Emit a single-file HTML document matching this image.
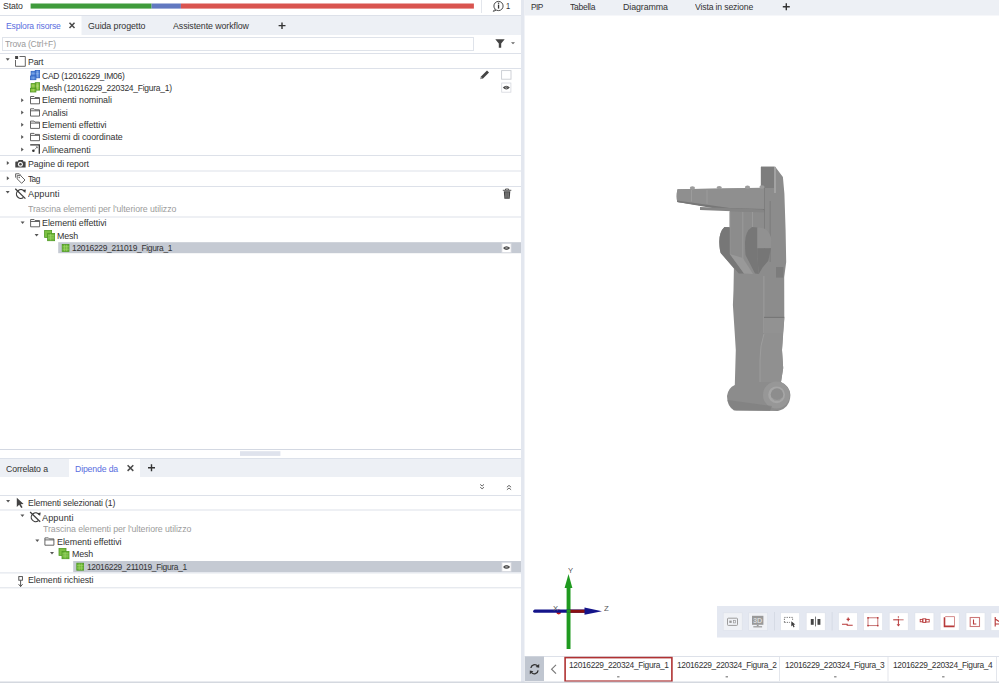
<!DOCTYPE html><html><head><meta charset="utf-8"><style>
html,body{margin:0;padding:0;width:999px;height:683px;overflow:hidden;background:#fff;}
.t{position:absolute;white-space:pre;font-family:"Liberation Sans", sans-serif;line-height:1;transform-origin:0 0;}
svg{position:absolute;left:0;top:0;}
</style></head><body>
<svg width="999" height="683" viewBox="0 0 999 683">
<rect x="30.6" y="3.5" width="121" height="5.1" fill="#3f9b3c" />
<rect x="151.6" y="3.5" width="29.3" height="5.1" fill="#6178c0" />
<rect x="180.9" y="3.5" width="293" height="5.1" fill="#d9544f" />
<rect x="481" y="0" width="1" height="13" fill="#e3e6ec" />
<g fill="none" stroke="#333" stroke-width="0.9"><circle cx="498.5" cy="6" r="4.6"/></g>
<path d="M494.5 9.5 L493.3 11.4 L496 10.3" fill="#fff" stroke="#333" stroke-width="0.8"/>
<rect x="497.9" y="4.6" width="1.3" height="4" fill="#333"/><rect x="497.9" y="2.6" width="1.3" height="1.2" fill="#333"/>
<rect x="0" y="15" width="521" height="1" fill="#dde1e9" />
<rect x="0" y="16" width="521" height="19" fill="#edf0f5" />
<rect x="0" y="16" width="81.5" height="19" fill="#ffffff" />
<path d="M69.5 22.7 L74.5 27.9 M74.5 22.7 L69.5 27.9" stroke="#4a4a4a" stroke-width="1.5"/>
<path d="M282 22.4 V28.9 M278.6 25.65 H285.5" stroke="#333" stroke-width="1.4"/>
<rect x="2.5" y="37.5" width="471" height="13" fill="#fff" stroke="#dfe3ea" stroke-width="1"/>
<path d="M495.3 39.3 H504.7 L501.2 43.6 V47.8 L498.8 47.8 V43.6 Z" fill="#444"/>
<path d="M511 42.3 H515 L513 44.3 Z" fill="#666"/>
<rect x="0" y="53" width="521" height="1" fill="#dde1e9" />
<path d="M5.7 58.3 H9.7 L7.7 60.8 Z" fill="#555"/>
<g fill="none" stroke="#555" stroke-width="0.9"><path d="M19.5 56.5 H25.3 V66.3 H15.5 V60"/></g><rect x="15.1" y="56" width="3" height="3" fill="#444"/>
<rect x="0" y="68" width="521" height="1" fill="#dde1e9" />
<path d="M480.5 79 L481 76.6 L487 70.6 L489 72.6 L483 78.6 Z" fill="#444"/><path d="M480.3 79.3 L481 76.8 L482.8 78.6 Z" fill="#999"/>
<rect x="501.6" y="70.6" width="9.4" height="8.6" fill="#fff" stroke="#c9ccd2" stroke-width="0.9"/>
<rect x="501.7" y="83.0" width="9.2" height="9.2" fill="#fff" stroke="#d5d8de" stroke-width="0.8"/>
<path d="M502.8 87.6 Q506.3 83.8 509.8 87.6 Q506.3 91.4 502.8 87.6 Z" fill="#4a4a4a"/><circle cx="506.3" cy="87.6" r="1.1" fill="#bdbdbd"/><circle cx="506.3" cy="87.6" r="0.5" fill="#4a4a4a"/>
<g fill="#5b8ede" stroke="#2f62c0" stroke-width="0.8"><rect x="35.2" y="70.4" width="4.4" height="7.4"/><rect x="31.1" y="71.3" width="4.1" height="4.7"/><rect x="30.4" y="76" width="5.5" height="3.7"/></g>
<path d="M35.6 73.7 H39.2 M37.4 70.8 V77.4 M31.5 73.6 H34.8 M33.2 76.4 V79.3" stroke="#fff" stroke-opacity="0.35" stroke-width="0.6"/>
<g fill="#8cc541" stroke="#4b951f" stroke-width="0.8"><rect x="35.2" y="82.7" width="4.4" height="7.4"/><rect x="31.1" y="83.6" width="4.1" height="4.7"/><rect x="30.4" y="88.3" width="5.5" height="3.7"/></g>
<path d="M35.6 86.0 H39.2 M37.4 83.1 V89.7 M31.5 85.89999999999999 H34.8 M33.2 88.7 V91.6" stroke="#fff" stroke-opacity="0.35" stroke-width="0.6"/>
<path d="M21.2 98.2 V102.2 L23.7 100.2 Z" fill="#555"/>
<g fill="none" stroke="#555" stroke-width="0.9"><path d="M30.5 96.5 H34 L35 97.5 H39.5 V103.8 H30.5 Z"/><path d="M30.5 98.5 H39.5"/></g>
<path d="M21.2 110.5 V114.5 L23.7 112.5 Z" fill="#555"/>
<g fill="none" stroke="#555" stroke-width="0.9"><path d="M30.5 108.8 H34 L35 109.8 H39.5 V116.1 H30.5 Z"/><path d="M30.5 110.8 H39.5"/></g>
<path d="M21.2 122.8 V126.8 L23.7 124.8 Z" fill="#555"/>
<g fill="none" stroke="#555" stroke-width="0.9"><path d="M30.5 121.1 H34 L35 122.1 H39.5 V128.39999999999998 H30.5 Z"/><path d="M30.5 123.1 H39.5"/></g>
<path d="M21.2 135.1 V139.1 L23.7 137.1 Z" fill="#555"/>
<g fill="none" stroke="#555" stroke-width="0.9"><path d="M30.5 133.4 H34 L35 134.4 H39.5 V140.70000000000002 H30.5 Z"/><path d="M30.5 135.4 H39.5"/></g>
<path d="M21.2 147.6 V151.6 L23.7 149.6 Z" fill="#555"/>
<path d="M30.2 144.8 H39.3 V153.7" fill="none" stroke="#333" stroke-width="1.3"/><circle cx="33.4" cy="150.8" r="1.3" fill="#333"/><path d="M34.6 149.6 L37.2 147" fill="none" stroke="#555" stroke-width="0.7"/><path d="M35.6 146.6 H37.6 V148.6 Z" fill="#555"/>
<rect x="0" y="155" width="521" height="1" fill="#dde1e9" />
<path d="M6.8 160.9 V164.9 L9.3 162.9 Z" fill="#555"/>
<path d="M15.3 162.2 Q15.3 161.6 16 161.6 H17.8 L18.6 159.9 H22.8 L23.6 161.6 H25 Q25.6 161.6 25.6 162.2 V167.4 H15.3 Z" fill="#444"/><circle cx="20.4" cy="164.3" r="2.5" fill="#f4f4f4"/><circle cx="20.4" cy="164.3" r="1.3" fill="#444"/>
<rect x="0" y="170.5" width="521" height="1" fill="#dde1e9" />
<path d="M6.8 176.3 V180.3 L9.3 178.3 Z" fill="#555"/>
<g fill="none" stroke="#555" stroke-width="0.9" stroke-linejoin="round"><path d="M15.6 177.6 V173.8 H19.3 L20.8 175.3"/><path d="M17.2 175.6 H20.6 L25 180 L21.6 183.3 L17.2 178.9 Z"/></g><circle cx="19.2" cy="177.5" r="0.7" fill="#555"/>
<rect x="0" y="186" width="521" height="1" fill="#dde1e9" />
<path d="M5.7 191 H9.7 L7.7 193.5 Z" fill="#555"/>
<g transform="translate(0 0)"><g fill="none" stroke="#3c3c3c" stroke-width="1.2"><path d="M24.4 191.4 A4.4 4.4 0 1 0 23.4 197.6"/><path d="M15.3 188.8 L25.4 198.6"/></g><path d="M22.6 190 L25.9 189.4 L25.3 192.9 Z" fill="#3c3c3c"/></g>
<path d="M502.8 190.3 H511.3 M505.5 190 V189 H508.6 V190" stroke="#444" stroke-width="0.9" fill="none"/><path d="M503.8 191.2 H510.3 L509.7 198.8 H504.4 Z" fill="#444"/><path d="M505.8 192.3 V197.8 M507 192.3 V197.8 M508.3 192.3 V197.8" stroke="#bbb" stroke-width="0.5"/>
<rect x="0" y="216.5" width="521" height="1" fill="#dde1e9" />
<path d="M20.6 221.6 H24.6 L22.6 224.1 Z" fill="#555"/>
<g fill="none" stroke="#555" stroke-width="0.9"><path d="M30.6 219.5 H34.1 L35.1 220.5 H39.6 V226.8 H30.6 Z"/><path d="M30.6 221.5 H39.6"/></g>
<path d="M34.6 234 H38.6 L36.6 236.5 Z" fill="#555"/>
<g stroke="#4f9a24" stroke-width="0.8"><rect x="44.6" y="230.4" width="7" height="7" fill="#7cc043"/><rect x="47.6" y="233.4" width="7" height="7.3" fill="#6fb83a"/></g>
<path d="M48.0 235.8 H54.2 M48.0 238 H54.2 M50.7 233.8 V240.4" stroke="#a6d877" stroke-width="0.6"/>
<rect x="58.2" y="242.2" width="462.8" height="11" fill="#c5cad3" />
<rect x="62.199999999999996" y="244.4" width="6.8" height="7" fill="#6ab534" stroke="#4f9a24" stroke-width="0.8"/>
<path d="M62.599999999999994 246.8 H68.8 M62.599999999999994 249.2 H68.8 M64.6 244.8 V251.2 M66.7 244.8 V251.2" stroke="#a8da72" stroke-width="0.6"/>
<rect x="501.9" y="243.5" width="9.2" height="9.2" fill="#fff" stroke="#d5d8de" stroke-width="0.8"/>
<path d="M503.0 248.1 Q506.5 244.3 510.0 248.1 Q506.5 251.9 503.0 248.1 Z" fill="#4a4a4a"/><circle cx="506.5" cy="248.1" r="1.1" fill="#bdbdbd"/><circle cx="506.5" cy="248.1" r="0.5" fill="#4a4a4a"/>
<rect x="0" y="449" width="521" height="1" fill="#d3d8e2" />
<rect x="240" y="451.2" width="40.4" height="4.7" fill="#dfe3ed" />
<rect x="0" y="458" width="521" height="1" fill="#dce1ea" />
<rect x="0" y="459" width="521" height="18" fill="#edf0f5" />
<rect x="69" y="459" width="71" height="18" fill="#ffffff" />
<path d="M127.6 465.2 L133.3 470.9 M133.3 465.2 L127.6 470.9" stroke="#4a4a4a" stroke-width="1.5"/>
<path d="M151.5 464.2 V471.2 M148 467.7 H155" stroke="#333" stroke-width="1.4"/>
<path d="M480.2 484.4 L482.1 486 L484 484.4 M480.2 487.2 L482.1 488.8 L484 487.2" fill="none" stroke="#555" stroke-width="0.9"/>
<path d="M506.9 487.2 L509 485.4 L511.1 487.2 M506.9 489.8 L509 488 L511.1 489.8" fill="none" stroke="#555" stroke-width="0.9"/>
<rect x="0" y="495" width="521" height="1" fill="#dde1e9" />
<path d="M6.1 500 H10.1 L8.1 502.5 Z" fill="#555"/>
<path d="M16.8 497.8 L16.8 507 L19.2 504.8 L21.2 508 L22.6 507.2 L20.7 504.2 L23.6 503.9 Z" fill="#444"/>
<rect x="0" y="509.5" width="521" height="1" fill="#dde1e9" />
<path d="M20.4 514.5 H24.4 L22.4 517.0 Z" fill="#555"/>
<g transform="translate(14.8 323.2)"><g fill="none" stroke="#3c3c3c" stroke-width="1.2"><path d="M24.4 191.4 A4.4 4.4 0 1 0 23.4 197.6"/><path d="M15.3 188.8 L25.4 198.6"/></g><path d="M22.6 190 L25.9 189.4 L25.3 192.9 Z" fill="#3c3c3c"/></g>
<path d="M35.3 539.5 H39.3 L37.3 542.0 Z" fill="#555"/>
<g fill="none" stroke="#555" stroke-width="0.9"><path d="M44.9 537.9000000000001 H48.4 L49.4 538.9000000000001 H53.9 V545.2 H44.9 Z"/><path d="M44.9 539.9000000000001 H53.9"/></g>
<path d="M50 552 H54 L52 554.5 Z" fill="#555"/>
<g stroke="#4f9a24" stroke-width="0.8"><rect x="59.0" y="548.4" width="7" height="7" fill="#7cc043"/><rect x="62.0" y="551.4" width="7" height="7.3" fill="#6fb83a"/></g>
<path d="M62.4 553.8 H68.6 M62.4 556 H68.6 M65.1 551.8 V558.4" stroke="#a6d877" stroke-width="0.6"/>
<rect x="73.2" y="561" width="447.8" height="11.2" fill="#c5cad3" />
<rect x="76.80000000000001" y="563.1999999999999" width="6.8" height="7" fill="#6ab534" stroke="#4f9a24" stroke-width="0.8"/>
<path d="M77.2 565.5999999999999 H83.4 M77.2 568.0 H83.4 M79.2 563.5999999999999 V570.0 M81.30000000000001 563.5999999999999 V570.0" stroke="#a8da72" stroke-width="0.6"/>
<rect x="501.9" y="562.3" width="9.2" height="9.2" fill="#fff" stroke="#d5d8de" stroke-width="0.8"/>
<path d="M503.0 566.9 Q506.5 563.0999999999999 510.0 566.9 Q506.5 570.6999999999999 503.0 566.9 Z" fill="#4a4a4a"/><circle cx="506.5" cy="566.9" r="1.1" fill="#bdbdbd"/><circle cx="506.5" cy="566.9" r="0.5" fill="#4a4a4a"/>
<rect x="0" y="572.4" width="521" height="1" fill="#dde1e9" />
<g fill="none" stroke="#444" stroke-width="0.9"><rect x="18.8" y="576.6" width="3.6" height="3.6"/><path d="M20.6 580.4 V586.4 M18.6 584.2 L20.6 586.6 L22.6 584.2"/></g>
<rect x="0" y="587.3" width="521" height="1" fill="#dde1e9" />
<rect x="521" y="0" width="3.5" height="683" fill="#e3e7ef" />
<rect x="524.5" y="0" width="474.5" height="15.5" fill="#edf0f5" />
<path d="M786.3 3.3 V10.2 M782.8 6.75 H789.8" stroke="#333" stroke-width="1.4"/>
<rect x="566.6" y="586" width="3.9" height="63" fill="#1f9a1f"/><path d="M564.6 588 L568.5 573.9 L572.4 588 Z" fill="#1f9a1f"/>
<circle cx="558.7" cy="612" r="2.4" fill="#c41616"/>
<path d="M534.8 609.6 H586 V612.8 H534.8 A1.6 1.6 0 0 1 534.8 609.6 Z" fill="#14148a"/>
<rect x="569.5" y="609.7" width="15.5" height="3.1" fill="#8a1010"/>
<path d="M584.5 607.6 L602 611.2 L584.5 614.8 Z" fill="#14148a"/>
<rect x="566.6" y="609.6" width="3.9" height="3.2" fill="#1f9a1f"/>
<rect x="717" y="606" width="282" height="31.5" fill="#e4e8f1" />
<rect x="723.2" y="612.8" width="19" height="17.8" fill="#f0f2f6" stroke="#dbe0ea" stroke-width="0.6"/>
<rect x="748.7" y="612.8" width="19" height="17.8" fill="#f0f2f6" stroke="#dbe0ea" stroke-width="0.6"/>
<rect x="774" y="612" width="1" height="18.5" fill="#d6dbe5" />
<rect x="780.6" y="612.8" width="19" height="17.8" fill="#fff" stroke="#dbe0ea" stroke-width="0.6"/>
<rect x="806.2" y="612.8" width="19" height="17.8" fill="#fff" stroke="#dbe0ea" stroke-width="0.6"/>
<rect x="831.6" y="612" width="1" height="18.5" fill="#d6dbe5" />
<rect x="838.4" y="612.8" width="19" height="17.8" fill="#fff" stroke="#dbe0ea" stroke-width="0.6"/>
<rect x="863.6" y="612.8" width="19" height="17.8" fill="#fff" stroke="#dbe0ea" stroke-width="0.6"/>
<rect x="889.2" y="612.8" width="19" height="17.8" fill="#fff" stroke="#dbe0ea" stroke-width="0.6"/>
<rect x="914.9" y="612.8" width="19" height="17.8" fill="#fff" stroke="#dbe0ea" stroke-width="0.6"/>
<rect x="940.2" y="612.8" width="19" height="17.8" fill="#fff" stroke="#dbe0ea" stroke-width="0.6"/>
<rect x="966" y="612.8" width="19" height="17.8" fill="#fff" stroke="#dbe0ea" stroke-width="0.6"/>
<rect x="991" y="612.8" width="19" height="17.8" fill="#fff" stroke="#dbe0ea" stroke-width="0.6"/>
<rect x="727.5" y="618.2" width="10" height="7.2" rx="0.8" fill="none" stroke="#9c9c9c" stroke-width="1"/><rect x="729.3" y="620.6" width="2.4" height="2.3" fill="#999"/><rect x="733.6" y="620.6" width="2" height="2.3" fill="none" stroke="#999" stroke-width="0.7"/>
<rect x="752" y="615.8" width="11.4" height="9" fill="#999"/><rect x="756.8" y="624.8" width="1.8" height="1.4" fill="#999"/><rect x="753.3" y="626.2" width="8.8" height="1.2" fill="#999"/>
<text x="757.7" y="623.2" font-family="Liberation Sans" font-size="7.3" font-weight="bold" text-anchor="middle" fill="#d8d8d8">3D</text>
<path d="M784.4 622.4 V617.4 H792.6 V620.2 M784.4 622.4 H790" fill="none" stroke="#555" stroke-width="0.8" stroke-dasharray="1.3 1.1"/><path d="M791.3 621.2 V626.4 L792.5 625.2 L793.6 627.4 L794.6 626.8 L793.6 624.8 L795.3 624.6 Z" fill="#3a3a3a"/>
<rect x="810.8" y="619" width="2.9" height="5.8" fill="#444"/><rect x="817.5" y="619" width="2.9" height="5.8" fill="#444"/><rect x="815.1" y="616.6" width="0.8" height="9.8" fill="#555"/>
<path d="M846.6 619.4 H849.8 M848.2 617.6 V621.2" stroke="#b83a3a" stroke-width="1.2"/><path d="M842 624.2 H847.2 V625.3 H852.7" fill="none" stroke="#b83a3a" stroke-width="1.1"/>
<rect x="868" y="617.8" width="9.8" height="7.8" fill="none" stroke="#c26a6a" stroke-width="0.9"/><g fill="#b83a3a"><rect x="867.3" y="617.1" width="1.5" height="1.5"/><rect x="877" y="617.1" width="1.5" height="1.5"/><rect x="867.3" y="624.9" width="1.5" height="1.5"/><rect x="877" y="624.9" width="1.5" height="1.5"/></g>
<path d="M893.2 619.8 H898.4" stroke="#b83a3a" stroke-width="1.1"/><path d="M898.4 619.8 H903.6" stroke="#c87878" stroke-width="1.1"/><path d="M898.4 618.8 V624.6" stroke="#b83a3a" stroke-width="1"/><circle cx="898.4" cy="617" r="0.7" fill="#b83a3a"/><path d="M896.6 624.2 H900.2 L898.4 626.6 Z" fill="#b83a3a"/>
<g fill="none" stroke="#b83a3a" stroke-width="0.9"><rect x="920.2" y="619.4" width="2.6" height="2.4"/><rect x="922.8" y="618.8" width="3" height="3.6"/><rect x="925.8" y="619.4" width="3.4" height="2.6"/></g>
<path d="M944.5 617.3 V626.4 H954.6" fill="none" stroke="#b83a3a" stroke-width="1.6"/><path d="M945.2 616.6 H954.5 V626" fill="none" stroke="#d08080" stroke-width="0.9"/>
<rect x="970.2" y="617.5" width="9.3" height="9" fill="none" stroke="#c77" stroke-width="1.1"/><path d="M973.5 619.5 V624 H976.3" fill="none" stroke="#b83a3a" stroke-width="1.1"/>
<path d="M995.2 617 V626.5 M995.2 619 L999 621.5 M995.2 624 H999" fill="none" stroke="#b83a3a" stroke-width="1.1"/>
<rect x="524.5" y="656" width="474.5" height="1" fill="#dde1e9" />
<rect x="524.8" y="656.5" width="19.2" height="24.5" fill="#c0c6d0" />
<path d="M530.9 668 A3.8 3.8 0 0 1 537.6 666 M538.1 670.4 A3.8 3.8 0 0 1 531.4 672.4" fill="none" stroke="#333" stroke-width="1.3"/><path d="M539.2 664 L539.2 667.8 L535.6 667 Z M529.8 674.2 L529.8 670.4 L533.4 671.2 Z" fill="#333"/>
<path d="M556 664.8 L551.6 669.2 L556 673.6" fill="none" stroke="#7a7a7a" stroke-width="1.2"/>
<rect x="565.1" y="657.6" width="106.8" height="23.6" fill="#fff" stroke="#b03232" stroke-width="1.6"/>
<rect x="617.1" y="676.4" width="2.4" height="0.9" fill="#555"/>
<rect x="779" y="657" width="1" height="24" fill="#e3e6ec" />
<rect x="725.6" y="676.4" width="2.4" height="0.9" fill="#555"/>
<rect x="834.1" y="676.4" width="2.4" height="0.9" fill="#555"/>
<rect x="887.5" y="657" width="1" height="24" fill="#e3e6ec" />
<rect x="942.1" y="676.4" width="2.4" height="0.9" fill="#555"/>
<rect x="996" y="657" width="1" height="24" fill="#e3e6ec" />
<rect x="0" y="681.5" width="999" height="1.5" fill="#d4d8df" />
<path d="M677.5 189.3 Q676 195.5 677.2 202 L729.6 209.8 L729.6 227 L724.5 226.9 Q719 232 719.3 242.6 Q719.6 250 720.7 253 L733.9 268.5 L733.5 290 L732.9 305 L734.6 331 L735.8 350 L734.8 385 Q728 388 727 396 Q727 406 734 410.5 L778 411 Q790 408 790.4 395 Q790 386 781 382 L783.2 368 L782 350 L784.3 319 L784.2 277 L786.2 262 L785.6 230 L784.4 193.8 L782.9 176.9 L775.2 166.7 L760.9 166.7 L760.9 188 Z" fill="#8c8c8c"/>
<path d="M760.9 166.7 L774 166.7 L774 188 L760.9 188 Z" fill="#7d7d7d"/>
<path d="M774 166.7 L775.2 166.7 L776 168 L776 193 L774 193 Z" fill="#a2a2a2"/>
<path d="M677.5 189.3 L761 187.8 L764.5 188.3 L764.5 210.2 L729.6 209.8 L677.2 202 Q676 195.5 677.5 189.3 Z" fill="#8f8f8f"/>
<path d="M677.2 200.5 L729.6 208 L764.5 209 L764.5 211.5 L729.6 211 L677.2 202 Z" fill="#777"/>
<path d="M700 207 L764 209.5 L764 212.5 L700 210 Z" fill="#858585"/>
<path d="M764.5 188 V262 M770.2 201 V262" stroke="#777" stroke-width="0.7"/>
<path d="M763.9 276 V333" stroke="#a2a2a2" stroke-width="0.8"/>
<path d="M691.5 190 V201.5 M707 190 V203.8" stroke="#a0a0a0" stroke-width="0.8"/>
<path d="M729.8 212 V262 M742.8 212 V262 M752.5 212 V228" stroke="#a3a3a3" stroke-width="0.6"/>
<ellipse cx="692.4" cy="188" rx="2.6" ry="1.7" fill="#9c9c9c"/>
<ellipse cx="719.2" cy="187.6" rx="2.6" ry="1.7" fill="#9c9c9c"/>
<ellipse cx="747.5" cy="187.3" rx="2.6" ry="1.7" fill="#9c9c9c"/>
<ellipse cx="762" cy="187" rx="2.6" ry="1.7" fill="#9c9c9c"/>
<path d="M724.5 226.9 Q719 232 719.3 242.6 Q719.6 250 720.7 253 L738.8 273.5 L744 273.5 L729.8 254 L729.8 227.5 Z" fill="#777"/>
<path d="M729.8 254 L744 273.5 L753 274 L742.8 258 Z" fill="#999"/>
<path d="M752.1 226.9 Q745.2 231 745 242.6 Q745 250 745.5 255 L755 273.5 L758.8 274 L757.4 257 L757.4 227.4 Z" fill="#777"/>
<path d="M757.4 227.4 Q768 227 771.2 237.9 L771 248.3 L757.4 248.3 Z" fill="#919191"/>
<path d="M757.4 248.3 L771 248.3 L768.3 260.7 L762.6 267.4 L758.8 274 L757.4 257 Z" fill="#767676"/>
<path d="M776 267 L783.5 267 L783.5 277.6 L776 277.6 Z" fill="#7c7c7c"/>
<path d="M764 316.8 L784.3 316.8 L784.3 318 L764 318 Z" fill="#777"/>
<path d="M764 318 L784.3 318 L783 333.8 L764 333.8 Z" fill="#929292"/>
<path d="M764 333.8 Q760 345 760 360 L760 382 L781 382 L783.2 368 L782 350 L783 333.8 Z" fill="#909090"/>
<path d="M764 333.8 Q760 345 760 360 L760 382" fill="none" stroke="#a3a3a3" stroke-width="0.7"/>
<circle cx="776.4" cy="395" r="13.4" fill="#979797"/>
<circle cx="776.6" cy="394.8" r="8.4" fill="#a6a6a6"/><circle cx="777" cy="394.6" r="6.3" fill="#8d8d8d"/><path d="M772 398 A6.3 6.3 0 0 0 782 398" fill="none" stroke="#9e9e9e" stroke-width="1"/>
<path d="M727.5 400 Q730 409 736 410.5 L770 411 L772 406 Z" fill="#7d7d7d" opacity="0.6"/>
</svg>
<span class="t" id="t0" style="left:3.40px;top:2.08px;font-size:9.0px;color:#333333;letter-spacing:-0.154px;transform:scaleX(0.9706)">Stato</span>
<span class="t" id="t1" style="left:506.30px;top:2.18px;font-size:9.0px;color:#333333;letter-spacing:-0.826px;transform:scaleX(0.8354)">1</span>
<span class="t" id="t2" style="left:5.60px;top:21.88px;font-size:9.0px;color:#5a6ee0;letter-spacing:-0.187px;transform:scaleX(0.9563)">Esplora risorse</span>
<span class="t" id="t3" style="left:87.80px;top:21.88px;font-size:9.0px;color:#333333;letter-spacing:-0.079px;transform:scaleX(0.9827)">Guida progetto</span>
<span class="t" id="t4" style="left:173.00px;top:21.88px;font-size:9.0px;color:#333333;letter-spacing:-0.085px;transform:scaleX(0.9806)">Assistente workflow</span>
<span class="t" id="t5" style="left:5.20px;top:39.78px;font-size:9.0px;color:#9a9a9a;letter-spacing:-0.194px;transform:scaleX(0.9550)">Trova (Ctrl+F)</span>
<span class="t" id="t6" style="left:27.70px;top:57.88px;font-size:9.0px;color:#333333;letter-spacing:-0.172px;transform:scaleX(0.9688)">Part</span>
<span class="t" id="t7" style="left:42.20px;top:71.88px;font-size:9.0px;color:#333333;letter-spacing:-0.279px;transform:scaleX(0.9458)">CAD (12016229_IM06)</span>
<span class="t" id="t8" style="left:42.20px;top:84.08px;font-size:9.0px;color:#333333;letter-spacing:-0.276px;transform:scaleX(0.9433)">Mesh (12016229_220324_Figura_1)</span>
<span class="t" id="t9" style="left:42.30px;top:96.38px;font-size:9.0px;color:#333333;letter-spacing:-0.033px;transform:scaleX(0.9926)">Elementi nominali</span>
<span class="t" id="t10" style="left:42.30px;top:108.68px;font-size:9.0px;color:#333333;letter-spacing:-0.060px;transform:scaleX(0.9864)">Analisi</span>
<span class="t" id="t11" style="left:42.30px;top:120.98px;font-size:9.0px;color:#333333;letter-spacing:-0.038px;transform:scaleX(0.9903)">Elementi effettivi</span>
<span class="t" id="t12" style="left:42.30px;top:133.28px;font-size:9.0px;color:#333333;letter-spacing:-0.072px;transform:scaleX(0.9828)">Sistemi di coordinate</span>
<span class="t" id="t13" style="left:42.30px;top:145.78px;font-size:9.0px;color:#333333;letter-spacing:-0.015px;transform:scaleX(0.9966)">Allineamenti</span>
<span class="t" id="t14" style="left:27.70px;top:159.88px;font-size:9.0px;color:#333333;letter-spacing:-0.086px;transform:scaleX(0.9798)">Pagine di report</span>
<span class="t" id="t15" style="left:28.20px;top:174.88px;font-size:9.0px;color:#333333;letter-spacing:-0.577px;transform:scaleX(0.9205)">Tag</span>
<span class="t" id="t16" style="left:27.70px;top:190.48px;font-size:9.0px;color:#333333;letter-spacing:0.080px;transform:scaleX(1.0157)">Appunti</span>
<span class="t" id="t17" style="left:28.30px;top:204.88px;font-size:9.0px;color:#9c9c9c;letter-spacing:-0.081px;transform:scaleX(0.9786)">Trascina elementi per l&#39;ulteriore utilizzo</span>
<span class="t" id="t18" style="left:42.40px;top:219.48px;font-size:9.0px;color:#333333;letter-spacing:-0.038px;transform:scaleX(0.9903)">Elementi effettivi</span>
<span class="t" id="t19" style="left:56.90px;top:231.78px;font-size:9.0px;color:#333333;letter-spacing:-0.120px;transform:scaleX(0.9836)">Mesh</span>
<span class="t" id="t20" style="left:71.70px;top:244.18px;font-size:9.0px;color:#333333;letter-spacing:-0.325px;transform:scaleX(0.9350)">12016229_211019_Figura_1</span>
<span class="t" id="t21" style="left:6.00px;top:464.88px;font-size:9.0px;color:#333333;letter-spacing:-0.128px;transform:scaleX(0.9712)">Correlato a</span>
<span class="t" id="t22" style="left:75.40px;top:464.88px;font-size:9.0px;color:#5a6ee0;letter-spacing:-0.161px;transform:scaleX(0.9686)">Dipende da</span>
<span class="t" id="t23" style="left:27.70px;top:499.48px;font-size:9.0px;color:#333333;letter-spacing:-0.134px;transform:scaleX(0.9671)">Elementi selezionati (1)</span>
<span class="t" id="t24" style="left:42.20px;top:513.58px;font-size:9.0px;color:#333333;letter-spacing:0.080px;transform:scaleX(1.0157)">Appunti</span>
<span class="t" id="t25" style="left:43.00px;top:524.68px;font-size:9.0px;color:#9c9c9c;letter-spacing:-0.081px;transform:scaleX(0.9786)">Trascina elementi per l&#39;ulteriore utilizzo</span>
<span class="t" id="t26" style="left:57.00px;top:537.88px;font-size:9.0px;color:#333333;letter-spacing:-0.038px;transform:scaleX(0.9903)">Elementi effettivi</span>
<span class="t" id="t27" style="left:71.50px;top:550.18px;font-size:9.0px;color:#333333;letter-spacing:-0.120px;transform:scaleX(0.9836)">Mesh</span>
<span class="t" id="t28" style="left:86.50px;top:562.68px;font-size:9.0px;color:#333333;letter-spacing:-0.332px;transform:scaleX(0.9336)">12016229_211019_Figura_1</span>
<span class="t" id="t29" style="left:27.70px;top:576.38px;font-size:9.0px;color:#333333;letter-spacing:-0.078px;transform:scaleX(0.9805)">Elementi richiesti</span>
<span class="t" id="t30" style="left:530.60px;top:2.78px;font-size:9.0px;color:#333333;letter-spacing:-0.550px;transform:scaleX(0.9243)">PIP</span>
<span class="t" id="t31" style="left:570.20px;top:2.78px;font-size:9.0px;color:#333333;letter-spacing:-0.260px;transform:scaleX(0.9454)">Tabella</span>
<span class="t" id="t32" style="left:623.00px;top:2.78px;font-size:9.0px;color:#333333;letter-spacing:-0.096px;transform:scaleX(0.9836)">Diagramma</span>
<span class="t" id="t33" style="left:695.10px;top:2.78px;font-size:9.0px;color:#333333;letter-spacing:-0.159px;transform:scaleX(0.9621)">Vista in sezione</span>
<span class="t" id="t34" style="left:568.40px;top:567.15px;font-size:7.5px;color:#555;letter-spacing:0.091px;transform:scaleX(1.0182)">Y</span>
<span class="t" id="t35" style="left:553.40px;top:604.85px;font-size:7.5px;color:#555;letter-spacing:0.091px;transform:scaleX(1.0182)">X</span>
<span class="t" id="t36" style="left:604.00px;top:605.45px;font-size:7.5px;color:#555;letter-spacing:0.199px;transform:scaleX(1.0433)">Z</span>
<span class="t" id="t37" style="left:569.00px;top:661.18px;font-size:9.0px;color:#333333;letter-spacing:-0.352px;transform:scaleX(0.9300)">12016229_220324_Figura_1</span>
<span class="t" id="t38" style="left:677.30px;top:661.18px;font-size:9.0px;color:#333333;letter-spacing:-0.352px;transform:scaleX(0.9300)">12016229_220324_Figura_2</span>
<span class="t" id="t39" style="left:785.30px;top:661.18px;font-size:9.0px;color:#333333;letter-spacing:-0.359px;transform:scaleX(0.9286)">12016229_220324_Figura_3</span>
<span class="t" id="t40" style="left:893.00px;top:661.18px;font-size:9.0px;color:#333333;letter-spacing:-0.359px;transform:scaleX(0.9286)">12016229_220324_Figura_4</span>
</body></html>
